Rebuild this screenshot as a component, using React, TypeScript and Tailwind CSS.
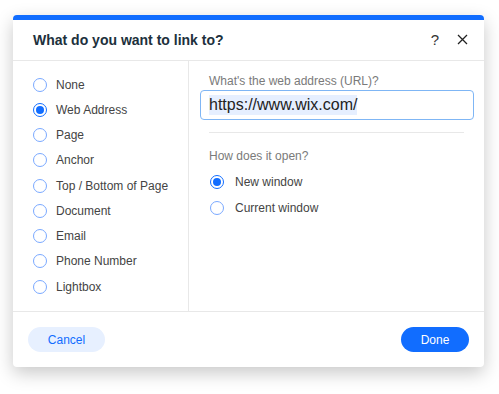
import { useState } from "react";

const linkTypes = [
  "None",
  "Web Address",
  "Page",
  "Anchor",
  "Top / Bottom of Page",
  "Document",
  "Email",
  "Phone Number",
  "Lightbox",
];

function Radio({ checked }: { checked: boolean }) {
  return (
    <span
      className={
        "flex h-[14px] w-[14px] shrink-0 items-center justify-center rounded-full border " +
        (checked ? "border-[#116dff] bg-white" : "border-[#7aa9ff] bg-white")
      }
    >
      {checked && <span className="h-[8px] w-[8px] rounded-full bg-[#116dff]" />}
    </span>
  );
}

export default function App() {
  const [type, setType] = useState("Web Address");
  const [openIn, setOpenIn] = useState("New window");

  return (
    <div
      className="flex h-[394px] w-[499px] bg-white pl-[13px] pt-[15px]"
      style={{ fontFamily: '"Liberation Sans", Arial, sans-serif' }}
    >
      <div className="flex h-[352px] w-[471px] flex-col overflow-hidden rounded-[4px] bg-white shadow-[0_6px_18px_rgba(0,0,0,0.22)]">
        <div className="h-[5px] bg-[#116dff]" />

        <div className="flex h-[41px] items-center border-b border-[#e8e8e8] pl-[20px] pr-[16px]">
          <h1 className="flex-1 text-[14px] font-bold text-[#20303c]">
            What do you want to link to?
          </h1>
          <span className="mr-[18px] text-[15px] text-[#333]">?</span>
          <svg width="11" height="11" viewBox="0 0 11 11" className="mb-[1px]">
            <path d="M1 1L10 10M10 1L1 10" stroke="#222" strokeWidth="1.3" />
          </svg>
        </div>

        <div className="flex h-[250px]">
          <div className="w-[176px] border-r border-[#e8e8e8] pl-[20px] pt-[11px]">
            {linkTypes.map((t) => (
              <button
                key={t}
                onClick={() => setType(t)}
                className="flex h-[25.25px] w-full items-center gap-[9px] text-left text-[12px] text-[#444]"
              >
                <Radio checked={type === t} />
                <span>{t}</span>
              </button>
            ))}
          </div>

          <div className="flex-1 pl-[11px] pr-[10px] pt-[12px]">
            <label className="block pl-[9px] text-[12px] leading-[16px] text-[#7a7a7a]">
              What's the web address (URL)?
            </label>
            <div className="mt-[1px] flex h-[30px] items-center rounded-[4px] border border-[#7fb6f5] px-[8px]">
              <span className="bg-[#e6efff] text-[16px] leading-[20px] text-[#222]">
                https://www.wix.com/
              </span>
            </div>
            <div className="ml-[9px] mr-[10px] mt-[12px] border-t border-[#e8e8e8]" />
            <div className="pl-[9px] pt-[15px] text-[12px] leading-[16px] text-[#7a7a7a]">
              How does it open?
            </div>
            <div className="pl-[10px] pt-[5px]">
              {["New window", "Current window"].map((o) => (
                <button
                  key={o}
                  onClick={() => setOpenIn(o)}
                  className="flex h-[26px] w-full items-center gap-[11px] text-left text-[12px] text-[#444]"
                >
                  <Radio checked={openIn === o} />
                  <span>{o}</span>
                </button>
              ))}
            </div>
          </div>
        </div>

        <div className="flex flex-1 items-center justify-between border-t border-[#e8e8e8] pl-[15px] pr-[15px]">
          <button className="h-[25px] w-[77px] rounded-full bg-[#e7f0ff] text-[12px] text-[#116dff]">
            Cancel
          </button>
          <button className="h-[25px] w-[68px] rounded-full bg-[#116dff] text-[12px] text-white">
            Done
          </button>
        </div>
      </div>
    </div>
  );
}
